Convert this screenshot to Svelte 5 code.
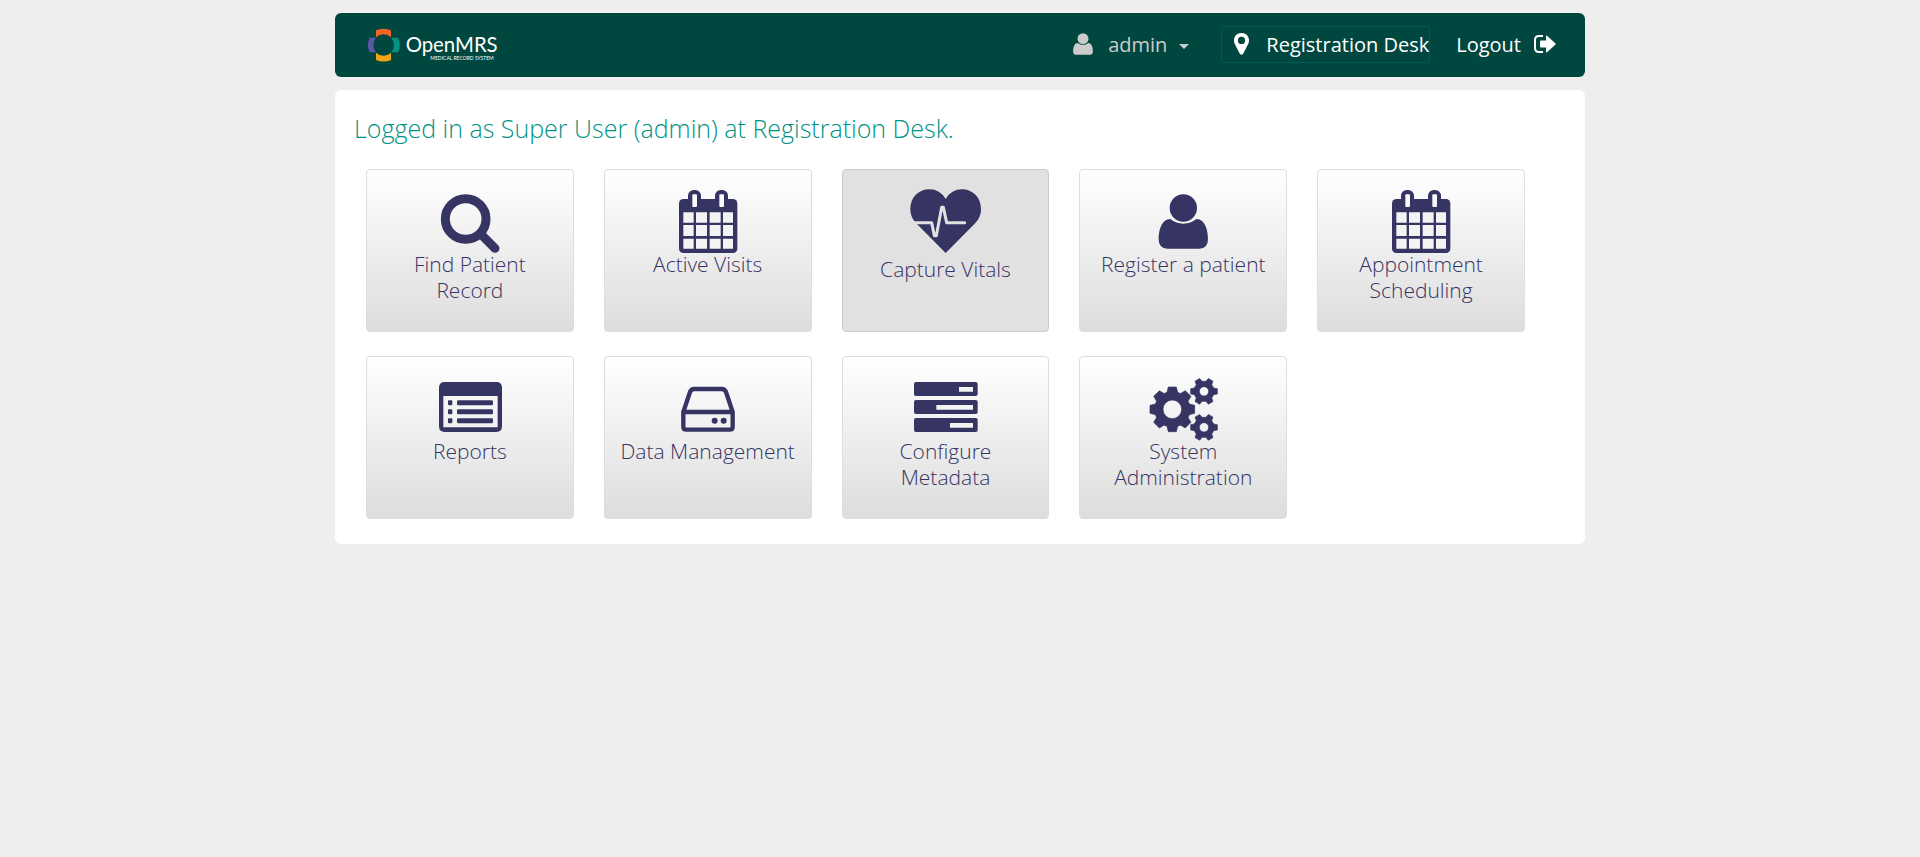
<script>
  function gear(cx, cy, outer, body, hole, teeth, tip, base) {
    const point = (r, w, a) => {
      const x = cx + r * Math.cos(a) - w * Math.sin(a);
      const y = cy + r * Math.sin(a) + w * Math.cos(a);
      return `${x.toFixed(1)} ${y.toFixed(1)}`;
    };
    const points = [];
    for (let i = 0; i < teeth; i++) {
      const a = (i * 2 * Math.PI) / teeth;
      points.push(point(body, -base, a), point(outer, -tip, a), point(outer, tip, a), point(body, base, a));
    }
    return `M${points.join('L')}ZM${cx - hole} ${cy}a${hole} ${hole} 0 1 0 ${2 * hole} 0a${hole} ${hole} 0 1 0 ${-2 * hole} 0Z`;
  }

  const gears = [
    gear(301, 193, 67, 51, 28, 8, 12, 16),
    gear(396, 139, 40, 29, 14, 6, 8, 10),
    gear(396, 247, 40, 29, 14, 6, 8, 10)
  ].join('');

  const apps = [
    { label: 'Find Patient Record', icon: 'search', view: '210 30 240 243' },
    { label: 'Active Visits', icon: 'calendar', view: '216 30 240 243' },
    { label: 'Capture Vitals', icon: 'vitals', view: '213 30 240 258', active: true },
    { label: 'Register a patient', icon: 'user', view: '213 30 240 243' },
    { label: 'Appointment Scheduling', icon: 'calendar', view: '216 30 240 243' },
    { label: 'Reports', icon: 'list', view: '210 36 240 243' },
    { label: 'Data Management', icon: 'drive', view: '216 36 240 243' },
    { label: 'Configure Metadata', icon: 'tasks', view: '213 36 240 243' },
    { label: 'System Administration', icon: 'gears', view: '213 36 240 243' }
  ];
</script>

<div class="page">
  <header>
    <a class="logo" href="#home">
      <svg viewBox="126 66 396 108" width="132" height="36" role="img" aria-label="OpenMRS">
        <path fill="#f26522" d="M153 76Q176 66 198 76V97Q188 88 176 88Q163 88 153 97Z" />
        <path fill="#5b57a6" d="M134 98H153Q145 108 145 120Q145 132 153 142H134Q123 120 134 98Z" />
        <path fill="#009384" d="M199 98H219Q230 120 219 142H199Q207 132 207 120Q207 108 199 98Z" />
        <path fill="#eea616" d="M153 143Q163 152 176 152Q188 152 198 143V165Q176 174 153 165Z" />
        <text class="word" x="242" y="140">OpenMRS</text>
        <text class="motto" x="316" y="165">MEDICAL RECORD SYSTEM</text>
      </svg>
    </a>
    <nav>
      <button class="account" type="button">
        <svg viewBox="259 102 150 165" width="20" height="22" aria-hidden="true">
          <circle cx="334" cy="144" r="41" />
          <path d="M295 177Q312 191 334 191Q356 191 373 177C400 177 408 212 408 238Q408 266 382 266H286Q260 266 260 238C260 212 268 177 295 177Z" />
        </svg>
        <span>admin</span>
        <svg class="caret" viewBox="0 0 10 5" width="10" height="5" aria-hidden="true"><path d="M0 0H10L5 5Z" /></svg>
      </button>
      <button class="location" type="button">
        <svg viewBox="0 0 15 22" width="15" height="22" aria-hidden="true">
          <path fill-rule="evenodd" d="M7.500 0C12 0 15 3 15 7.500C15 9 14.700 9.800 14.200 11L9.300 20.500Q7.500 23 5.700 20.500L.8 11C.3 9.800 0 9 0 7.500C0 3 3 0 7.500 0ZM7.500 3.800A3.600 3.600 0 1 0 7.500 11A3.600 3.600 0 1 0 7.500 3.800Z" />
        </svg>
        <span>Registration Desk</span>
      </button>
      <a class="logout" href="#logout">
        <span>Logout</span>
        <svg viewBox="0 0 22 18" width="22" height="18" aria-hidden="true">
          <path fill="none" stroke="#fff" stroke-width="2" d="M9 1H5Q1 1 1 5V13Q1 17 5 17H9" />
          <path d="M7 5.500H12V1.500Q12 0 13.300 1L21.300 8.200Q22 9 21.300 9.800L13.300 17Q12 18 12 16.500V12.500H7Q6 12.500 6 11.500V6.500Q6 5.500 7 5.500Z" />
        </svg>
      </a>
    </nav>
  </header>

  <main>
    <h1>Logged in as Super User (admin) at Registration Desk.</h1>
    <div class="apps">
      {#each apps as app}
        <a class="app" class:active={app.active} href="#app">
          <svg viewBox={app.view} width="80" height={app.active ? 86 : 81} aria-hidden="true">
            {#if app.icon === 'search'}
              <circle cx="317" cy="177" r="61" fill="none" stroke="#363463" stroke-width="27" />
              <path d="M367 227L405 265" fill="none" stroke="#363463" stroke-width="27" stroke-linecap="round" />
            {:else if app.icon === 'calendar'}
              <rect x="249" y="117" width="175" height="162" rx="13" />
              <rect x="276" y="90" width="39" height="58" rx="17" />
              <rect x="357" y="90" width="39" height="58" rx="17" />
              <rect x="289" y="103" width="14" height="38" rx="3" fill="#fafafa" />
              <rect x="370" y="103" width="14" height="38" rx="3" fill="#fafafa" />
              <path fill="#f3f3f3" d="M262 157H293V188H262ZM300 157H333V188H300ZM341 157H374V188H341ZM381 157H411V188H381ZM262 195H293V228H262ZM300 195H333V228H300ZM341 195H374V228H341ZM381 195H411V228H381ZM262 236H293V266H262ZM300 236H333V266H300ZM341 236H374V266H341ZM381 236H411V266H381Z" />
            {:else if app.icon === 'vitals'}
              <path d="M335 279L248 191C234 177 229 163 229 147C229 112 254 88 286 88Q318 88 335 117Q352 88 384 88C416 88 441 112 441 147C441 163 436 177 422 191Z" />
              <path fill="none" stroke="#e1e1e1" stroke-width="9" stroke-linecap="round" stroke-linejoin="round" d="M238 188H293L301 227H307L323 142H328L338 188H392" />
            {:else if app.icon === 'user'}
              <circle cx="334" cy="144" r="41" />
              <path d="M295 177Q312 191 334 191Q356 191 373 177C400 177 408 212 408 238Q408 266 382 266H286Q260 266 260 238C260 212 268 177 295 177Z" />
            {:else if app.icon === 'list'}
              <path fill-rule="evenodd" d="M254 111H409Q426 111 426 128V244Q426 261 409 261H254Q237 261 237 244V128Q237 111 254 111ZM250 153V247H413V153Z" />
              <path d="M267 166h7q3 0 3 3v9q0 3-3 3h-7q-3 0-3-3v-9q0-3 3-3zM267 193h7q3 0 3 3v9q0 3-3 3h-7q-3 0-3-3v-9q0-3 3-3zM267 220h7q3 0 3 3v9q0 3-3 3h-7q-3 0-3-3v-9q0-3 3-3z" />
              <rect x="291" y="166" width="108" height="15" rx="4" />
              <rect x="291" y="193" width="108" height="15" rx="4" />
              <rect x="291" y="220" width="108" height="15" rx="4" />
            {:else if app.icon === 'drive'}
              <path fill="none" stroke="#363463" stroke-width="13" stroke-linejoin="round" d="M262 201L282 141Q286 132 294 132H378Q386 132 390 141L410 201V245Q410 254 401 254H271Q262 254 262 245ZM262 201H410" />
              <circle cx="356" cy="227" r="9" />
              <circle cx="383" cy="227" r="9" />
            {:else if app.icon === 'tasks'}
              <rect x="240" y="111" width="191" height="42" rx="6" />
              <rect x="240" y="165" width="191" height="42" rx="6" />
              <rect x="240" y="219" width="191" height="42" rx="6" />
              <path fill="#f3f3f3" d="M375 126H417V140H375ZM307 180H417V194H307ZM348 234H417V248H348Z" />
            {:else}
              <path fill-rule="evenodd" stroke="#363463" stroke-width="2" stroke-linejoin="round" d={gears} />
            {/if}
          </svg>
          <span>{app.label}</span>
        </a>
      {/each}
    </div>
  </main>
</div>

<style>
  :global(body) {
    background: #eee;
    font-family: 'Open Sans', sans-serif;
  }
  .page {
    box-sizing: border-box;
    max-width: 1250px;
    margin: 0 auto;
    padding-top: 13px;
  }
  header {
    display: flex;
    align-items: center;
    justify-content: space-between;
    box-sizing: border-box;
    min-height: 64px;
    padding: 0 29px 2px 32px;
    border-radius: 6px;
    background: #00473f;
  }
  .logo {
    display: flex;
  }
  .logo svg {
    overflow: visible;
    margin-top: 2px;
  }
  .word {
    font: 400 61px Lato, sans-serif;
    fill: #fff;
  }
  .motto {
    font: 400 15px Lato, sans-serif;
    fill: #fff;
  }
  nav {
    display: flex;
    align-items: center;
    font-size: 20px;
    line-height: 27px;
  }
  nav svg {
    fill: currentColor;
  }
  button {
    display: flex;
    align-items: center;
    padding: 0;
    border: 0;
    background: none;
    font: inherit;
    cursor: pointer;
  }
  .account {
    gap: 15px;
    color: #ccc;
  }
  .caret {
    margin: 4px 0 0 -3px;
  }
  .location {
    gap: 17px;
    box-sizing: border-box;
    height: 37px;
    margin-left: 32px;
    padding-left: 12px;
    border: 1px solid #005c50;
    border-radius: 4px;
    color: #fff;
  }
  .logout {
    display: flex;
    align-items: center;
    gap: 13px;
    margin-left: 26px;
    color: #fff;
    text-decoration: none;
  }
  main {
    margin-top: 13px;
    padding: 23px 19px 25px;
    border-radius: 6px;
    background: #fff;
  }
  h1 {
    margin: 0;
    color: #009384;
    font-size: 25px;
    font-weight: 300;
    line-height: 31px;
  }
  .apps {
    display: grid;
    grid-template-columns: repeat(5, 1fr);
    gap: 24px 30px;
    padding: 25px 41px 0 12px;
  }
  .app {
    display: flex;
    flex-direction: column;
    align-items: center;
    box-sizing: border-box;
    min-height: 163px;
    padding: 0 10px;
    border: 1px solid #ddd;
    border-radius: 4px;
    background: linear-gradient(#fff, #ddd);
    color: #363463;
    font-size: 21px;
    font-weight: 300;
    line-height: 26px;
    text-align: center;
    text-decoration: none;
  }
  .app.active {
    border-color: #ccc;
    background: #e1e1e1;
  }
  .app svg {
    flex: none;
    overflow: visible;
    fill: #363463;
  }
  .app span {
    max-width: 176px;
  }
</style>
